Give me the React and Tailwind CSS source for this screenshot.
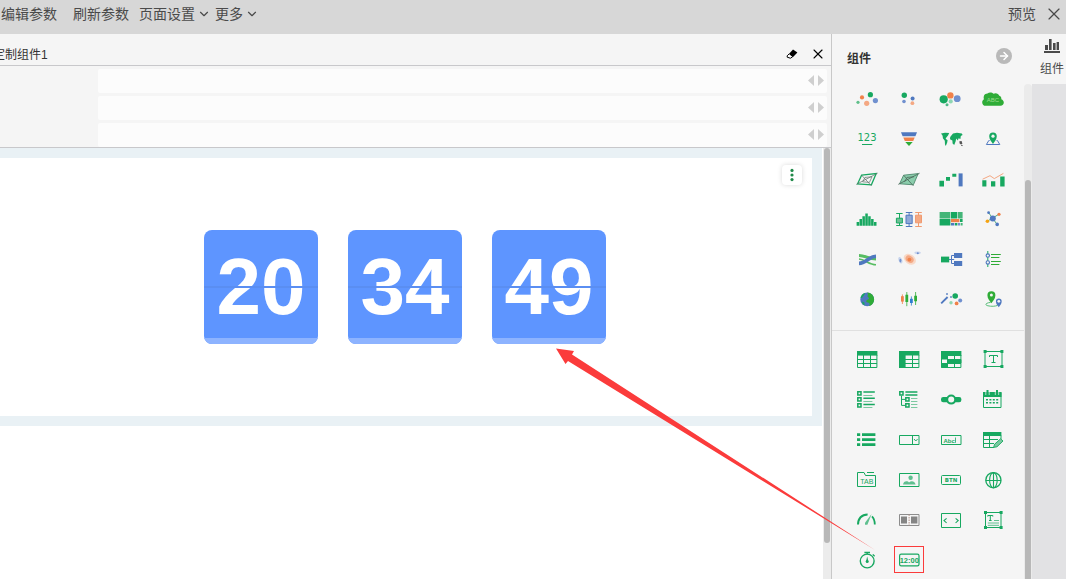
import { X, ChevronDown, ArrowRight } from 'lucide-react';

const green = '#17a860';
const mint = '#7cc9a1';
const blue = '#4f78bf';
const sky = '#7090cf';
const orange = '#f0814a';
const peach = '#f4a883';
const leaf = '#2fac37';

const Icon = ({ children }) => (
  <svg viewBox="0 0 24 24" className="w-6 h-6 overflow-visible" fill="none" aria-hidden="true">
    {children}
  </svg>
);

const pin = 'M0 8C-1.5 5.5 -4 3.5 -4 0A4 4 0 1 1 4 0C4 3.5 1.5 5.5 0 8Z';

const chartIcons = [
  {
    label: '散点图',
    art: (
      <>
        <circle cx="3" cy="15.3" r="1.6" fill="#5fbf8a" />
        <circle cx="7" cy="10.4" r="2.1" fill={orange} />
        <circle cx="15.4" cy="7.7" r="2.6" fill={green} />
        <circle cx="20.4" cy="13.6" r="2.6" fill={sky} />
        <circle cx="11.7" cy="16.3" r="2.6" fill={peach} />
      </>
    ),
  },
  {
    label: '分组散点图',
    art: (
      <>
        <circle cx="7.3" cy="8.3" r="2.7" fill={green} />
        <circle cx="15.6" cy="11.4" r="2" fill={blue} />
        <circle cx="7" cy="14.5" r="1.8" fill={sky} />
        <circle cx="15.4" cy="16.2" r="1.9" fill={peach} />
      </>
    ),
  },
  {
    label: '气泡图',
    art: (
      <>
        <circle cx="4.7" cy="12.3" r="4.1" fill={green} />
        <circle cx="11.4" cy="8.4" r="3.2" fill={orange} />
        <circle cx="18.2" cy="11.7" r="3.4" fill={sky} />
        <circle cx="11.7" cy="14.4" r="2.1" fill="#8fd6b2" />
        <circle cx="8" cy="17.7" r="1.5" fill="#4fb986" />
      </>
    ),
  },
  {
    label: '词云',
    art: (
      <>
        <path d="M5 18.8C2.6 18.8 1.2 17.4 1.2 15.4C1.2 13.8 2 12.9 3 12.3C2 9.5 3.5 6.5 6.5 6.6C8 5 11 5.2 12.5 6.8C14.5 5.6 17.5 6.3 18.3 8.8C20 9.4 20.6 10.8 20.3 12.2C22 12.8 22.8 14.2 22.8 15.6C22.8 17.4 21.5 18.8 19.5 18.8Z" fill={leaf} />
        <text x="12" y="15.4" fontSize="6" textAnchor="middle" fill="#9ddc8f" fontFamily="Liberation Sans, sans-serif">ABC</text>
      </>
    ),
  },
  {
    label: '指标卡',
    art: (
      <>
        <text x="12" y="14" fontSize="10" textAnchor="middle" fill={green} fontFamily="DejaVu Sans, sans-serif">123</text>
        <path d="M7 17.5H17.3" stroke={green} />
      </>
    ),
  },
  {
    label: '漏斗图',
    art: (
      <>
        <path d="M4 5.3H20L18.4 9.2H5.6Z" fill={blue} />
        <path d="M6.3 10.4H17.7L16.2 14H7.8Z" fill={orange} />
        <path d="M8.3 15.1H15.7L12 19Z" fill={leaf} />
      </>
    ),
  },
  {
    label: '地图',
    art: (
      <>
        <path d="M2 6.5L6 5.8L10.2 6L9 8.6L7.5 10.2L6.6 11.8L8.6 13.2L8.2 15.5L6.8 19L6 17.4L5.8 13.8L3.9 11.2L3.6 8.8Z" fill={green} />
        <path d="M12.4 8.6L14 6.6L18 5.8L22.8 6.4L23.6 8L21.8 9L21.4 12L19.6 11.2L18.8 13.5L17.2 11.6L16.6 14.4L15.2 18L13.6 16.4L13.4 13.4L11 12.2L11.2 10Z" fill={green} />
        <path d="M20.4 14.2L22.6 14L23.4 16.8L22 17.6L20.6 16.6Z" fill="#555" />
        <path d="M22.2 18.4L23.6 18.6" stroke="#555" />
      </>
    ),
  },
  {
    label: '定位地图',
    art: (
      <>
        <path d="M8.6 13.5H7.8L5.4 17.5H18.8L16.4 13.5H15.6" stroke={blue} />
        <path d={pin} transform="translate(12 9.3) scale(.95)" fill={green} />
        <circle cx="12" cy="9.2" r="1.6" fill="#f5f5f5" />
      </>
    ),
  },
  {
    label: '雷达图',
    art: (
      <>
        <path d="M6.6 8.2L21.2 6.6L16.4 17.8L2.6 16.8Z" stroke={green} strokeWidth="1.3" />
        <path d="M1.3 17.4L22.6 6.2M6.6 8.2L16.4 18.8M7.6 14.8L10 10.4L17 9.8L14.4 15.4Z" stroke="#5f7068" strokeWidth=".7" />
      </>
    ),
  },
  {
    label: '面积雷达图',
    art: (
      <>
        <path d="M6.6 8.2L21.2 6.6L16.4 17.8L2.6 16.8Z" fill="#8bcdac" stroke="#4f8a6e" strokeWidth=".9" />
        <path d="M1.3 17.4L22.6 6.2M6.6 8.2L16.4 18.8M7.6 14.8L10 10.4L17 9.8" stroke="#4a6658" strokeWidth=".8" />
      </>
    ),
  },
  {
    label: '瀑布图',
    art: (
      <>
        <path d="M.4 13.7H5V19.4H.4ZM7 10H11V13.7H7ZM13.3 6.7H17.3V9.7H13.3Z" fill={green} />
        <path d="M19.6 6.4H23.6V19.4H19.6Z" fill={blue} />
      </>
    ),
  },
  {
    label: '组合图',
    art: (
      <>
        <path d="M1.3 13.3H5.4V19.4H1.3ZM10 14.3H14.3V19.4H10ZM19.2 9.4H23.6V19.4H19.2Z" fill={green} />
        <path d="M1.6 12.2L9 8.7L13.3 11.6L22.4 6.4" stroke={peach} />
      </>
    ),
  },
  {
    label: '直方图',
    art: <path d="M1.6 15H4.1V18.8H1.6ZM4.5 12H7V18.8H4.5ZM7.4 9.3H9.9V18.8H7.4ZM10.3 6.4H12.8V18.8H10.3ZM13.2 9.3H15.7V18.8H13.2ZM16.1 12H18.6V18.8H16.1ZM19 15H21.5V18.8H19Z" fill={green} />,
  },
  {
    label: '箱形图',
    art: (
      <>
        <path d="M-.8 6.5H5.6M2.5 6.4V18.4M-.8 18.5H5.6" stroke={green} />
        <path d="M-.6 11.2H5.4V16H-.6Z" fill="#6cbf95" stroke={green} />
        <path d="M8.8 5.5H15.4M12.1 5.5V19.4M8.8 19.5H15.4" stroke={blue} />
        <path d="M9 8.2H15.2V16.6H9Z" fill="#90a8d8" stroke={blue} />
        <path d="M18.2 5.5H24.8M21.5 5.5V19.4M18.2 19.5H24.8" stroke="#f09a70" />
        <path d="M18.5 8.2H24.5V15.8H18.5Z" fill={peach} stroke="#f09a70" />
      </>
    ),
  },
  {
    label: '矩形树图',
    art: (
      <>
        <path d="M.6 5H11.4V11.4H.6ZM18.6 5H23.6V11.4H18.6Z" fill="#44b578" />
        <path d="M.6 12H11.4V18.5H.6ZM12 5H18V11.4H12ZM21 12H23.6V15H21Z" fill={green} />
        <path d="M12 12H20.4V15.2H12Z" fill={orange} />
        <path d="M12 16H15.4V18.5H12Z" fill={blue} />
        <path d="M16 16H18.4V18.5H16Z" fill={green} />
        <path d="M19 16H21V18.5H19Z" fill={sky} />
        <path d="M21.6 16H23.6V18.5H21.6Z" fill="#44b578" />
      </>
    ),
  },
  {
    label: '关系图',
    art: (
      <>
        <path d="M7.6 5.7L16 17.3M17.8 7.3L6.3 14.2" stroke="#4fae7c" />
        <circle cx="11.8" cy="11.4" r="3" fill={blue} />
        <circle cx="7.6" cy="5.7" r="1.4" fill={blue} />
        <circle cx="18" cy="7.3" r="1.6" fill={orange} />
        <circle cx="6.4" cy="14.3" r="1.8" fill="#f6a313" />
        <circle cx="16.2" cy="17.4" r="1.8" fill={blue} />
      </>
    ),
  },
  {
    label: '桑基图',
    art: (
      <>
        <path d="M4 8.4C10 8.4 14 12 21 12" stroke="#57bd62" strokeWidth="3" />
        <path d="M4 12C10 12.4 14 17.8 21 17.8" stroke="#57bd62" strokeWidth="1.6" />
        <path d="M4 16.4C11 16.4 14 9.4 21 9.2" stroke={blue} strokeWidth="3.6" />
      </>
    ),
  },
  {
    label: '热力图',
    art: (
      <>
        <ellipse cx="12.8" cy="12.2" rx="6.6" ry="4.8" transform="rotate(35 12.8 12.2)" fill="#f8d9c8" />
        <ellipse cx="12.6" cy="12.2" rx="4.4" ry="3.2" transform="rotate(35 12.6 12.2)" fill="#f4a985" />
        <circle cx="12.4" cy="12.6" r="1.9" fill={orange} />
        <ellipse cx="3.4" cy="13.2" rx="1.8" ry="3.4" transform="rotate(-20 3.4 13.2)" fill="#c8d4ec" />
        <ellipse cx="3.4" cy="13.6" rx="1" ry="1.8" fill={sky} />
        <ellipse cx="20.6" cy="5.8" rx="3.2" ry="1.3" fill="#c8d4ec" />
        <circle cx="20.8" cy="6.2" r="1" fill={sky} />
      </>
    ),
  },
  {
    label: '树图',
    art: (
      <>
        <path d="M10 12.5H15.2M15.2 8.5H12.5V16.5H15.2" stroke={blue} />
        <path d="M2 9.6H10.2V15.4H2Z" fill={green} />
        <path d="M15 6H23.2V11H15ZM15 14H23.2V19H15Z" fill={blue} />
      </>
    ),
  },
  {
    label: '时间轴',
    art: (
      <>
        <path d="M6.8 4V20" stroke={green} />
        <path d="M10 7.5H19.8M10 10.5H18.4M10 14.5H19.8M10 17.5H18.4" stroke={leaf} />
        <circle cx="6.8" cy="8.6" r="1.7" fill="#f5f5f5" stroke={blue} strokeWidth="1.1" />
        <circle cx="6.8" cy="15.4" r="1.7" fill="#f5f5f5" stroke={blue} strokeWidth="1.1" />
      </>
    ),
  },
  {
    label: '三维地球',
    art: (
      <>
        <circle cx="12.2" cy="12.4" r="6.9" fill={blue} />
        <path d="M12 5.5C16 5.6 19.1 8.6 19.1 12.4C19.1 15.4 17 18.4 14 19C15.6 17 14.4 15.6 12 15.2C10.4 14.6 11.6 12.4 13.6 12.2C14.8 11 12.6 10.2 12.4 9C13.4 8 13 6.6 12 5.5Z" fill={leaf} />
        <path d="M5.6 10.4C6.4 8 8 6.4 9.8 6C10 7.4 9 9 7.6 9.8C7.6 11.2 6.4 11.4 5.6 10.4ZM7 14.6L9.4 15.4L9.6 18.6C8 17.8 7.2 16.6 7 14.6Z" fill={green} />
      </>
    ),
  },
  {
    label: '股价图',
    art: (
      <>
        <path d="M5.4 7.4V17" stroke={orange} strokeWidth=".8" />
        <path d="M4 9.2H6.8V14.6H4Z" fill={orange} />
        <path d="M9.8 5V19.2M18.6 5V18" stroke={leaf} strokeWidth=".8" />
        <path d="M8.4 7.8H11.2V15H8.4ZM17.2 8.8H20V14.2H17.2Z" fill={leaf} />
        <path d="M14.4 9.4V18.6" stroke="#2f7fd0" strokeWidth=".8" />
        <path d="M13 11.8H15.8V16H13Z" fill="#2f7fd0" />
      </>
    ),
  },
  {
    label: '智能图表',
    art: (
      <>
        <path d="M2.2 16.4L8.6 10" stroke={blue} strokeWidth="1.8" />
        <path d="M8 6V8M7 7H9M12 9V11M11 10H13" stroke={blue} strokeWidth=".8" />
        <circle cx="16.2" cy="9" r="2.8" fill={green} />
        <circle cx="21.2" cy="13.4" r="2" fill={sky} />
        <circle cx="12" cy="15.8" r="1.7" fill="#8fd6b2" />
        <circle cx="17.6" cy="16.4" r="1.9" fill={orange} />
      </>
    ),
  },
  {
    label: '路径图',
    art: (
      <>
        <path d="M9.6 15.4C4 16 3.8 18.2 7 18.8C10.6 19.6 14 19.4 16.6 18.4" stroke="#57bd78" />
        <path d={pin} transform="translate(10.4 8.2)" fill={leaf} />
        <circle cx="10.4" cy="8" r="1.5" fill="#f5f5f5" />
        <path d={pin} transform="translate(17.8 14.4) scale(.72)" fill={blue} />
        <circle cx="17.8" cy="14.3" r="1.4" fill="#f5f5f5" />
      </>
    ),
  },
];

const controlIcons = [
  {
    label: '明细表',
    art: (
      <>
        <path d="M2 4H22.4V8.6H2Z" fill={green} />
        <path d="M2.5 8V20.5H21.9V8M2 12.5H22M2 16.5H22M8.5 8V20.5M15.5 8V20.5" stroke={green} />
      </>
    ),
  },
  {
    label: '分组表',
    art: (
      <>
        <path d="M2 4H22.4V8.6H8.6V21H2Z" fill={green} />
        <path d="M2.5 8V20.5H21.9V8M8 12.5H22M8 16.5H22M15.5 8V20.5" stroke={green} />
      </>
    ),
  },
  {
    label: '交叉表',
    art: (
      <>
        <path d="M2 4H22.4V9H2ZM2 9H8.6V12.4H2ZM8.6 12.6H22.4V16H8.6ZM2 16.4H8.6V20.6H2Z" fill={green} />
        <path d="M2.5 8V20.5H21.9V8M8 12.5H22M2 16.5H22M8.5 8V20.5M15.5 8V20.5" stroke={green} />
      </>
    ),
  },
  {
    label: '文本框',
    art: (
      <>
        <path d="M4 4.5H21V19.5H4Z" stroke={green} />
        <path d="M2.6 3H5.6V6H2.6ZM19.4 3H22.4V6H19.4ZM2.6 18H5.6V21H2.6ZM19.4 18H22.4V21H19.4Z" fill={green} />
        <path d="M8.5 10V8.5H16.5V10M12.5 8.5V16M10.5 15.5H14.5" stroke={green} />
      </>
    ),
  },
  {
    label: '列表过滤',
    art: (
      <>
        <path d="M2.8 4.8H6V8H2.8ZM2.8 10.8H6V14H2.8ZM2.8 16.8H6V20H2.8Z" stroke={green} strokeWidth="1.5" />
        <path d="M8.4 5H19.8M8.4 11.2H19.8M8.4 17.4H19.8" stroke={green} strokeWidth="1.5" />
        <path d="M8.4 8.5H17.4M8.4 14.5H17.4M8.4 20.5H17.4" stroke={mint} />
      </>
    ),
  },
  {
    label: '树状过滤',
    art: (
      <>
        <path d="M4.5 8.8V18.4H8M4.5 12.4H8" stroke={green} />
        <path d="M2.8 4.8H6V8H2.8ZM8.8 10.8H12V14H8.8ZM8.8 16.8H12V20H8.8Z" stroke={green} strokeWidth="1.5" />
        <path d="M8.4 5H20.4M8.4 8H20.4" stroke={green} strokeWidth="1.5" />
        <path d="M14 11.5H20.4M14 14.5H20.4M14 17.5H20.4M14 20.5H20.4" stroke={mint} />
      </>
    ),
  },
  {
    label: '滑块',
    art: (
      <>
        <rect x="2" y="10" width="20.4" height="5.2" rx="2.2" fill={green} />
        <circle cx="12.2" cy="12.6" r="4" fill="#f5f5f5" stroke={green} strokeWidth="2" />
      </>
    ),
  },
  {
    label: '日期',
    art: (
      <>
        <path d="M2.5 5.5H20V20.5H2.5Z" stroke={green} />
        <path d="M2 5H20.5V10H2Z" fill={green} />
        <path d="M6.5 3V7.4M16 3V7.4" stroke={green} strokeWidth="2" />
        <path d="M4.8 5V8M8.2 5V8M14.3 5V8M17.7 5V8" stroke="#f5f5f5" strokeWidth=".7" />
        <path d="M5 12.8H18M5 15.8H18" stroke={green} strokeWidth="1.4" strokeDasharray="2 1.4" />
      </>
    ),
  },
  {
    label: '项目列表',
    art: (
      <>
        <path d="M2 6.2H5.2V9H2ZM2 11.3H5.2V14H2ZM2 16.2H5.2V19H2Z" fill={green} />
        <path d="M7 6.2H20.4V9H7ZM7 11.3H20.4V14H7ZM7 16.2H20.4V19H7Z" fill={green} />
      </>
    ),
  },
  {
    label: '下拉框',
    art: (
      <>
        <path d="M2.5 8.5H22V17.5H2.5ZM15.5 8.5V17.5" stroke={green} />
        <path d="M17 12L18.8 14L20.6 12" stroke={green} strokeWidth=".9" />
      </>
    ),
  },
  {
    label: '输入框',
    art: (
      <>
        <path d="M2.5 8.5H22V17.5H2.5Z" stroke={green} />
        <text x="4.4" y="15.6" fontSize="6" fontWeight="700" fill={green} fontFamily="Liberation Sans, sans-serif">Abc</text>
        <path d="M16.5 10.5V15.8" stroke={green} strokeWidth=".8" />
      </>
    ),
  },
  {
    label: '填报表',
    art: (
      <>
        <path d="M2 5H20.4V9H2Z" fill={green} />
        <path d="M20 8.5V12M13 20.5H2.5V8.5M2 12.5H17M2 16.5H13M8.5 8.5V20.5" stroke={green} />
        <path d="M12.6 20.4L13.6 17.2L19.6 11.8L22 14L16 19.8Z" fill={mint} stroke={green} strokeWidth=".9" />
      </>
    ),
  },
  {
    label: '标签页',
    art: (
      <>
        <path d="M2.5 19.5V5.5H9L10.5 8.5H20.5V19.5ZM12 5.5H19" stroke={green} />
        <text x="11.8" y="17" fontSize="7" textAnchor="middle" fill={green} fontFamily="Liberation Sans, sans-serif">TAB</text>
      </>
    ),
  },
  {
    label: '图片',
    art: (
      <>
        <path d="M2.5 6.5H22V19.5H2.5Z" stroke={green} />
        <path d="M6 17.4C6.4 14.6 9 13.4 11 14.6L12 15.4C14 13.4 17.6 13.6 18.6 17.4Z" fill="#5fbf8f" />
        <circle cx="13.6" cy="10.8" r="2.2" fill="#5fbf8f" />
      </>
    ),
  },
  {
    label: '按钮',
    art: (
      <>
        <rect x="2.5" y="8.5" width="19" height="9" rx="1" stroke={green} />
        <text x="12" y="15.2" fontSize="5.5" fontWeight="700" textAnchor="middle" fill={green} fontFamily="DejaVu Sans, sans-serif">BTN</text>
      </>
    ),
  },
  {
    label: '网页',
    art: (
      <>
        <circle cx="12.4" cy="13.2" r="7.6" stroke={green} strokeWidth="1.3" />
        <ellipse cx="12.4" cy="13.2" rx="3.8" ry="7.6" stroke={green} strokeWidth="1.1" />
        <path d="M4.8 13.5H20M12.5 5.6V20.8" stroke={green} strokeWidth="1.1" />
      </>
    ),
  },
  {
    label: '仪表盘',
    art: (
      <>
        <path d="M3 17.6C3 11.6 6.6 7.4 12.6 7.4" stroke={green} strokeWidth="2" />
        <path d="M17 9.4C18.8 11.2 19.8 14 19.8 17.6" stroke={green} strokeWidth="1.8" />
        <path d="M16.6 7L10 15.8V17.8H12.4Z" fill="#5fbf8f" />
      </>
    ),
  },
  {
    label: '分栏',
    art: (
      <>
        <path d="M2.5 7.5H22V18.5H2.5Z" stroke="#8d8d8d" />
        <path d="M4 9.4H10V16.6H4ZM14 9.4H20.4V16.6H14Z" fill="#858585" />
        <path d="M12.1 7.5V18.5" stroke="#b08f86" strokeDasharray="1.5 1" />
      </>
    ),
  },
  {
    label: '代码',
    art: (
      <>
        <path d="M2.5 6.5H21.5V20.5H2.5Z" stroke={green} />
        <path d="M7.6 11.4L5 13.6L7.6 15.8M16.6 11.4L19.2 13.6L16.6 15.8" stroke={green} strokeWidth="1.1" />
      </>
    ),
  },
  {
    label: '富文本',
    art: (
      <>
        <path d="M4.5 5.5H20V20.5H4.5Z" stroke={green} />
        <path d="M3 4H6V7H3ZM18.6 4H21.6V7H18.6ZM3 19H6V22H3ZM18.6 19H21.6V22H18.6Z" fill={green} />
        <path d="M6.8 9.6V8.5H11.8V9.6M9.3 8.5V13.6M8 13.5H10.6" stroke={green} />
        <path d="M13 13.5H18M6.8 16H18M6.8 18.3H18" stroke="#5fbf8f" />
      </>
    ),
  },
  {
    label: '计时器',
    art: (
      <>
        <circle cx="12.2" cy="14" r="6.9" stroke={green} strokeWidth="1.4" />
        <path d="M9.4 5.5H15M12.2 5.5V7.4M17.8 7.4L19.6 9.2" stroke={green} strokeWidth="1.3" />
        <path d="M12.2 9.4L13.4 14.4H11Z" fill={green} />
        <circle cx="12.2" cy="14.4" r="1.5" fill={green} />
      </>
    ),
  },
  {
    label: '时钟',
    active: true,
    art: (
      <>
        <rect x="2.6" y="7.1" width="19.4" height="11.8" rx="1.6" stroke={green} strokeWidth="1.2" />
        <text x="12.3" y="15.8" fontSize="7.5" fontWeight="700" textAnchor="middle" fill={green} fontFamily="Liberation Sans Narrow, Liberation Sans, sans-serif">12:00</text>
      </>
    ),
  },
];

const IconGrid = ({ items }) => (
  <div className="grid grid-cols-4 pl-3.5 pr-2.5">
    {items.map((item) => (
      <button key={item.label} type="button" aria-label={item.label} className="h-10 flex items-center justify-center">
        <span className={item.active ? 'w-[30px] h-[27px] border border-[#fb3b3b] flex items-center justify-center' : 'flex'}>
          <Icon>{item.art}</Icon>
        </span>
      </button>
    ))}
  </div>
);

const TopBar = () => (
  <header className="h-[34px] shrink-0 bg-[#d7d7d7] flex items-start justify-between pl-px pr-0.5 text-sm text-[#4a4a4a]">
    <nav className="flex pt-1">
      <button type="button" className="mr-4">编辑参数</button>
      <button type="button" className="mr-2.5">刷新参数</button>
      <button type="button" className="flex items-center gap-0.5 mr-1">
        页面设置 <ChevronDown className="w-3.5 h-3.5" />
      </button>
      <button type="button" className="flex items-center gap-0.5">
        更多 <ChevronDown className="w-3.5 h-3.5" />
      </button>
    </nav>
    <div className="flex items-start gap-2 pt-1">
      <button type="button">预览</button>
      <button type="button" aria-label="关闭"><X className="w-5 h-5" strokeWidth={1.4} /></button>
    </div>
  </header>
);

const FieldRow = () => (
  <div className="h-6 ml-[98px] mr-1 pr-[3px] rounded-xs bg-[#fcfcfc] flex items-center justify-end gap-1">
    <button type="button" aria-label="向左">
      <svg viewBox="0 0 6 12" className="w-1.5 h-3"><path d="M6 0V11L0 5.5Z" fill="#cfcfcf" /></svg>
    </button>
    <button type="button" aria-label="向右">
      <svg viewBox="0 0 6 12" className="w-1.5 h-3"><path d="M0 0V11L6 5.5Z" fill="#cfcfcf" /></svg>
    </button>
  </div>
);

const FlipCard = ({ value }) => (
  <div className="relative w-[114px] h-[114px] rounded-lg overflow-hidden bg-[#5e95ff]">
    <div className="h-full flex items-center justify-center text-[80px] leading-none font-bold text-white font-['Liberation_Sans',sans-serif]">
      {value}
    </div>
    <div className="absolute inset-x-0 top-14 h-0.5 bg-[#5a8ef2]" />
    <div className="absolute inset-x-0 bottom-0 h-1.5 bg-[#8db3ff]" />
  </div>
);

const Workspace = () => (
  <main className="flex-1 min-w-0 flex flex-col border-r border-[#c8c8c8]">
    <div className="h-8 shrink-0 flex items-center justify-between pt-2 pr-[5px] border-b border-[#c8c8cb] text-[#333] overflow-hidden">
      <h1 className="-ml-[7px] pt-0.5 text-xs">定制组件1</h1>
      <div className="flex items-center gap-3">
        <button type="button" aria-label="清除">
          <svg viewBox="0 0 12 10" className="w-3 h-2.5">
            <path d="M7 .6L11.4 3.4L6.8 8.2L2.4 5.4Z" fill="#000" />
            <path d="M3 5L1.2 6.8V8.2L4.4 9.2L6.4 8" fill="#fff" stroke="#000" />
          </svg>
        </button>
        <button type="button" aria-label="关闭组件"><X className="w-4 h-4 text-black" strokeWidth={1.6} /></button>
      </div>
    </div>
    <div className="shrink-0 flex flex-col gap-[3px] pt-[3px] border-b border-[#c8c8cb]">
      <FieldRow />
      <FieldRow />
      <FieldRow />
    </div>
    <div className="flex-1 min-h-0 flex bg-white">
      <div className="flex-1 min-w-0 mr-px">
        <div className="bg-[#e9f1f5] py-2.5 pr-2.5">
          <section className="relative h-[258px] pr-0.5 bg-white flex items-center justify-center gap-[30px]">
            <FlipCard value="20" />
            <FlipCard value="34" />
            <FlipCard value="49" />
            <button type="button" aria-label="更多操作" className="absolute right-2.5 top-[7px] w-5 h-5 rounded-sm bg-white shadow-[0_0_5px_rgba(0,0,0,0.15)] flex items-center justify-center">
              <svg viewBox="0 0 4 14" className="w-1 h-3.5" fill="#218a4a">
                <circle cx="2" cy="2.4" r="1.6" />
                <circle cx="2" cy="7" r="1.6" />
                <circle cx="2" cy="11.6" r="1.6" />
              </svg>
            </button>
          </section>
        </div>
      </div>
      <div className="w-2 bg-[#ececec] px-px">
        <div className="h-[395px] rounded-full bg-[#b8b8b8]" />
      </div>
    </div>
  </main>
);

const ComponentPanel = () => (
  <aside className="w-[200px] shrink-0 flex flex-col">
    <div className="h-[50px] shrink-0 flex items-center justify-between pl-[15px] pr-5 text-[#333]">
      <h2 className="text-xs font-bold">组件</h2>
      <button type="button" aria-label="收起" className="w-4 h-4 mb-1.5 rounded-full bg-[#b9b9b9] flex items-center justify-center">
        <ArrowRight className="w-3 h-3 text-white" strokeWidth={3} />
      </button>
    </div>
    <div className="flex-1 min-h-0 flex">
      <div className="flex-1 overflow-hidden">
        <div className="-mt-[5px]">
          <IconGrid items={chartIcons} />
        </div>
        <hr className="mt-[11px] mb-2 border-[#e0e0e0]" />
        <IconGrid items={controlIcons} />
      </div>
      <div className="w-2 shrink-0 rounded-t-full bg-[#ebebeb] pt-24 px-px">
        <div className="h-full rounded-t-full bg-[#b8b8b8]" />
      </div>
    </div>
  </aside>
);

const SideTabs = () => (
  <div className="w-[34px] shrink-0 bg-[#e2e2e4]">
    <button type="button" className="w-full h-[50px] bg-[#f5f5f5] flex flex-col items-end gap-2 pr-0.5 pt-1 text-xs text-[#4a4a4a]">
      <svg viewBox="0 0 16 15" className="w-4 h-[15px] mr-1" fill="#4a4a4a" aria-hidden="true">
        <path d="M1 7H4V12H1ZM5 1H7.6V12H5ZM9 5H11.6V12H9ZM12.6 4H15V12H12.6ZM0 13H16V15H0Z" />
      </svg>
      组件
    </button>
  </div>
);

const App = () => {
  return (
    <div className="relative h-screen flex flex-col overflow-hidden bg-[#f5f5f5] font-['Liberation_Sans','Noto_Sans_CJK_SC',sans-serif]">
      <TopBar />
      <div className="flex-1 min-h-0 flex">
        <Workspace />
        <ComponentPanel />
        <SideTabs />
      </div>
      {/* Pointer from the clock component to its widget */}
      <svg viewBox="0 0 320 202" className="absolute right-[190px] top-[348px] w-80 h-[202px] pointer-events-none" aria-hidden="true">
        <path d="M0 .5L18 3L16 6.500L319 202L12 13L9.500 16Z" fill="#fb3b3b" />
      </svg>
    </div>
  );
};

export default App;
